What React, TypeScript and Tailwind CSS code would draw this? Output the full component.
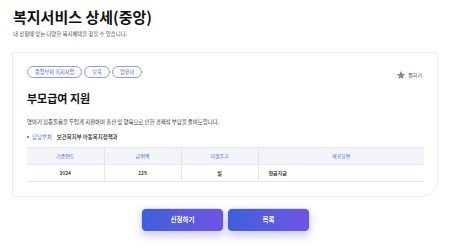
const rows = [{ year: '2024', amount: '129', cycle: '월', type: '현금지급' }]

export default function App() {
  return (
    <div className="w-[450px] h-[251px] bg-white overflow-hidden" style={{ fontFamily: '"Noto Sans CJK KR", "Noto Sans", sans-serif' }}>
      <div className="px-[13px] pt-[7px]">
        <h1 className="text-[15px] font-bold leading-[20px] text-[#111]">복지서비스 상세(중앙)</h1>
        <p className="mt-[3px] text-[5.4px] leading-[8px] text-[#555]">내 상황에 맞는 다양한 복지혜택을 찾을 수 있습니다.</p>
      </div>

      <div className="mx-[12px] mt-[14px] h-[145px] border border-[#ececf0] rounded-tr-[3px] rounded-br-[16px] px-[14px] pt-[11px]">
        <div className="flex items-center justify-between">
          <div className="flex gap-[2px]">
            {['중앙부처 복지사업', '보육', '영유아'].map((t) => (
              <span key={t} className="h-[12px] px-[7px] flex items-center rounded-full border border-[#8e9bf0] text-[5.2px] text-[#4a57c9]">
                {t}
              </span>
            ))}
          </div>
          <div className="flex items-center gap-[2px] pr-[1px] mt-[6px]">
            <svg width="10" height="10" viewBox="0 0 24 24" fill="#8a8a8a">
              <path d="M12 2l2.9 6.9 7.1.6-5.4 4.7 1.6 7.3L12 17.8 5.8 21.5l1.6-7.3L2 9.5l7.1-.6z" />
            </svg>
            <span className="text-[5px] text-[#444]">찜하기</span>
          </div>
        </div>

        <h2 className="mt-[11px] text-[11px] font-bold leading-[14px] text-[#111]">부모급여 지원</h2>

        <p className="mt-[13px] text-[5.4px] leading-[8px] text-[#333]">영아기 집중돌봄을 두텁게 지원하여 출산 및 양육으로 인한 경제적 부담을 줄여드립니다.</p>

        <div className="mt-[7px] flex items-center gap-[5px] text-[5.4px] leading-[8px]">
          <span className="flex items-center gap-[3px] text-[#4a5fd6]">
            <span className="w-[2px] h-[2px] rounded-full bg-[#4a5fd6]" />
            담당부처
          </span>
          <span className="text-[#222] font-medium">보건복지부 아동복지정책과</span>
        </div>

        <table className="mt-[6px] w-[397px] border-collapse text-[5px]">
          <thead>
            <tr className="h-[17px] bg-[#f4f5fa] text-[#4a5fd6] border-t border-[#e6e7ee]">
              <th className="w-[77px] font-normal border-r border-[#e6e7ee]">기준연도</th>
              <th className="w-[77px] font-normal border-r border-[#e6e7ee]">급여액</th>
              <th className="w-[77px] font-normal border-r border-[#e6e7ee]">지원주기</th>
              <th className="font-normal">제공유형</th>
            </tr>
          </thead>
          <tbody>
            {rows.map((r) => (
              <tr key={r.year} className="h-[17px] text-[#111] font-medium border-t border-b border-[#e6e7ee]">
                <td className="text-center border-r border-[#e6e7ee]">{r.year}</td>
                <td className="text-center border-r border-[#e6e7ee]">{r.amount}</td>
                <td className="text-center border-r border-[#e6e7ee]">{r.cycle}</td>
                <td className="pl-[10px]">{r.type}</td>
              </tr>
            ))}
          </tbody>
        </table>
      </div>

      <div className="mt-[11px] flex justify-center gap-[3px] pl-[1px]">
        <button className="w-[83px] h-[24px] rounded-[5px] bg-gradient-to-r from-[#3d5fd9] to-[#6e55e6] text-white text-[6.5px] font-bold shadow-[0_4px_8px_rgba(90,90,220,0.3)] border border-[#d9dcf7]">
          신청하기
        </button>
        <button className="w-[83px] h-[24px] rounded-[5px] bg-gradient-to-r from-[#3d5fd9] to-[#6e55e6] text-white text-[6.5px] font-bold shadow-[0_4px_8px_rgba(90,90,220,0.3)] border border-[#d9dcf7]">
          목록
        </button>
      </div>
    </div>
  )
}
